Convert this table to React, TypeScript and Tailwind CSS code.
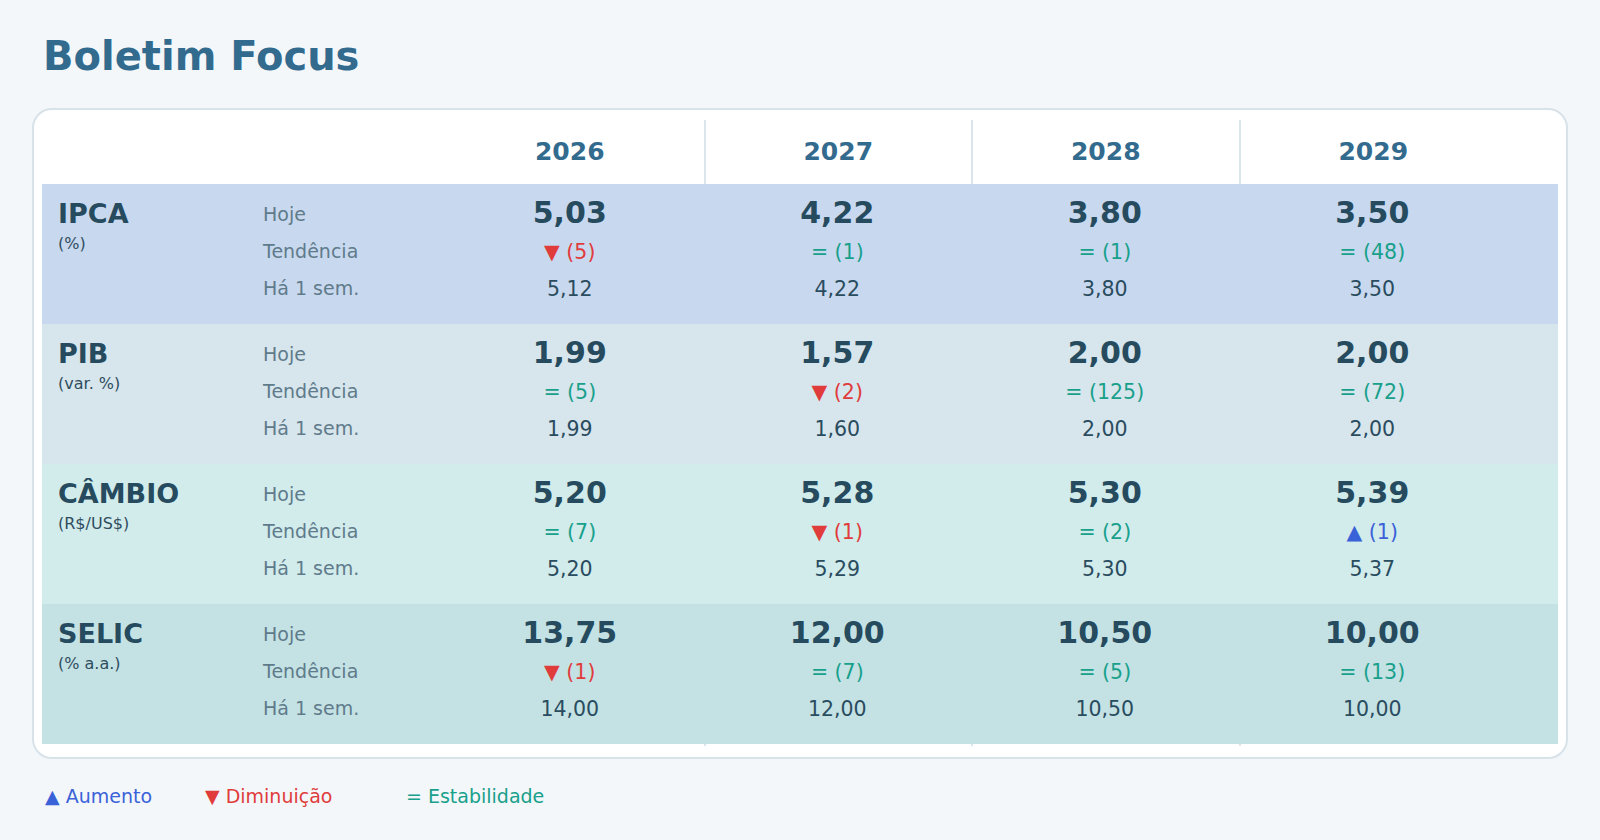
import React from "react";

type Trend = "up" | "down" | "eq";
type Cell = { v: string; t: Trend; n: string; old: string };
type Row = { name: string; unit: string; bg: string; cells: Cell[] };

const rows: Row[] = [
  {
    name: "IPCA",
    unit: "(%)",
    bg: "bg-[#c8d8ee]",
    cells: [
      { v: "5,03", t: "down", n: "5", old: "5,12" },
      { v: "4,22", t: "eq", n: "1", old: "4,22" },
      { v: "3,80", t: "eq", n: "1", old: "3,80" },
      { v: "3,50", t: "eq", n: "48", old: "3,50" },
    ],
  },
  {
    name: "PIB",
    unit: "(var. %)",
    bg: "bg-[#d7e5ec]",
    cells: [
      { v: "1,99", t: "eq", n: "5", old: "1,99" },
      { v: "1,57", t: "down", n: "2", old: "1,60" },
      { v: "2,00", t: "eq", n: "125", old: "2,00" },
      { v: "2,00", t: "eq", n: "72", old: "2,00" },
    ],
  },
  {
    name: "CÂMBIO",
    unit: "(R$/US$)",
    bg: "bg-[#d2ebeb]",
    cells: [
      { v: "5,20", t: "eq", n: "7", old: "5,20" },
      { v: "5,28", t: "down", n: "1", old: "5,29" },
      { v: "5,30", t: "eq", n: "2", old: "5,30" },
      { v: "5,39", t: "up", n: "1", old: "5,37" },
    ],
  },
  {
    name: "SELIC",
    unit: "(% a.a.)",
    bg: "bg-[#c4e2e4]",
    cells: [
      { v: "13,75", t: "down", n: "1", old: "14,00" },
      { v: "12,00", t: "eq", n: "7", old: "12,00" },
      { v: "10,50", t: "eq", n: "5", old: "10,50" },
      { v: "10,00", t: "eq", n: "13", old: "10,00" },
    ],
  },
];

const years = ["2026", "2027", "2028", "2029"];

function TrendText({ t, n }: { t: Trend; n: string }) {
  if (t === "down") return <span className="text-[#e03c3c]">▼ ({n})</span>;
  if (t === "up") return <span className="text-[#3a62d8]">▲ ({n})</span>;
  return <span className="text-[#18a08b]">= ({n})</span>;
}

const gridCols = "grid grid-cols-[221px_173px_repeat(4,minmax(0,1fr))_52px]";

export default function App() {
  return (
    <div className="min-h-screen w-full bg-[#f3f7fa] font-['DejaVu_Sans',sans-serif] px-[32px] pt-[32px] pb-[20px]">
      <h1 className="pl-[11px] text-[40px] leading-[48px] font-bold text-[#336b8f]">Boletim Focus</h1>

      <div className="mt-[28px] rounded-[20px] border-2 border-[#d7e2e9] bg-white px-[8px] pt-[10px] pb-[11px]">
        {/* header */}
        <div className={`${gridCols} h-[64px]`}>
          <div />
          <div />
          {years.map((y, i) => (
            <div
              key={y}
              className={`flex items-center justify-center text-[25px] font-bold text-[#336b8f] ${
                i > 0 ? "border-l-2 border-[#dbe5ec]" : ""
              }`}
            >
              {y}
            </div>
          ))}
          <div />
        </div>

        {rows.map((r) => (
          <div key={r.name} className={`${gridCols} h-[140px] ${r.bg}`}>
            <div className="pl-[16px] pt-[12px] flex flex-col">
              <span className="text-[27px] leading-[36px] font-bold text-[#264b5f]">{r.name}</span>
              <span className="text-[16px] leading-[23px] text-[#2f4d5f]">{r.unit}</span>
            </div>
            <div className="pt-[12px] flex flex-col text-[19px] leading-[37px] text-[#5f7b8b]">
              <span>Hoje</span>
              <span>Tendência</span>
              <span>Há 1 sem.</span>
            </div>
            {r.cells.map((c, i) => (
              <div key={i} className="pt-[8px] flex flex-col items-center">
                <span className="text-[30px] leading-[42px] font-bold text-[#264b5f]">{c.v}</span>
                <span className="text-[20.5px] leading-[37px]">
                  <TrendText t={c.t} n={c.n} />
                </span>
                <span className="text-[20.5px] leading-[37px] text-[#2a4c5f]">{c.old}</span>
              </div>
            ))}
            <div />
          </div>
        ))}

        {/* divider ticks below last row */}
        <div className={`${gridCols} h-[2px]`}>
          <div />
          <div />
          <div />
          <div className="border-l-2 border-[#dbe5ec]" />
          <div className="border-l-2 border-[#dbe5ec]" />
          <div className="border-l-2 border-[#dbe5ec]" />
          <div />
        </div>
      </div>

      <div className="mt-[25px] pl-[13px] flex text-[19px] leading-[24px]">
        <span className="w-[160px] text-[#3a62d8]">▲ Aumento</span>
        <span className="w-[201px] text-[#e03c3c]">▼ Diminuição</span>
        <span className="text-[#18a08b]">= Estabilidade</span>
      </div>
    </div>
  );
}
